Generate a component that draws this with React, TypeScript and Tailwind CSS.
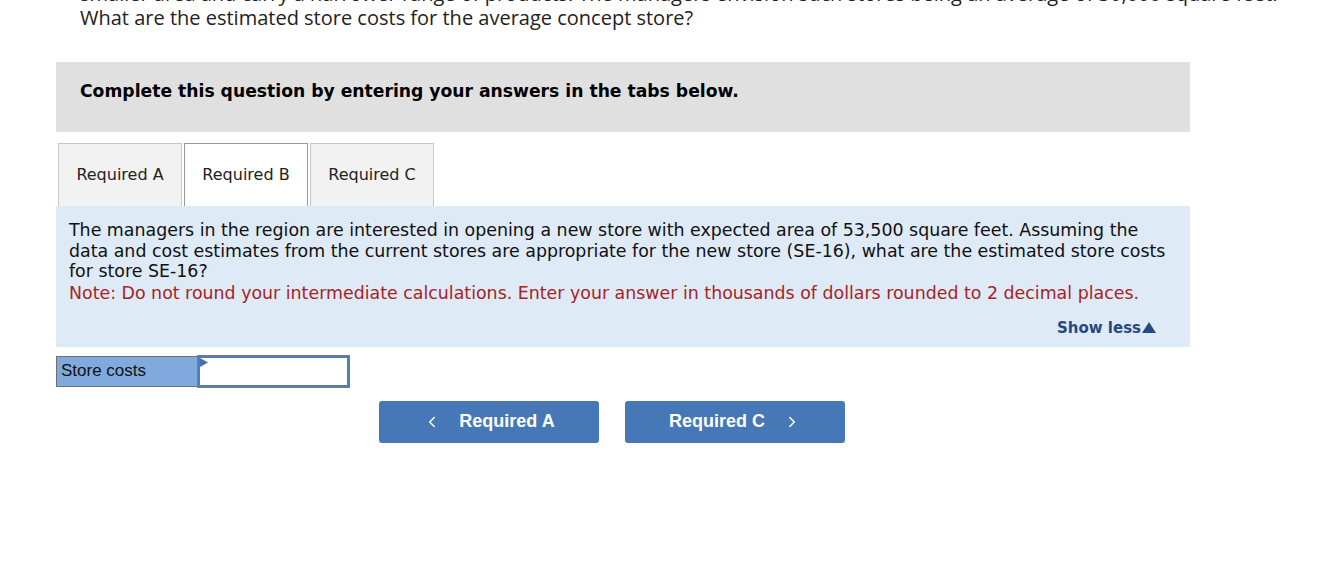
import { ChevronLeft, ChevronRight } from "lucide-react";

const verdana = "font-['Verdana','DejaVu_Sans',sans-serif]";
const arial = "font-['Liberation_Sans',Arial,sans-serif]";

export default function App() {
    return (
        <div className="w-[1320px] h-[574px] bg-white overflow-hidden">
            {/* Question stem, partly scrolled off */}
            <div className="pl-[80px] -mt-[18px] font-['Open_Sans',sans-serif] text-[20px] leading-[24px] text-[#222] whitespace-nowrap">
                <p>smaller area and carry a narrower range of products. The managers envision such stores being an average of 30,000 square feet.</p>
                <p>What are the estimated store costs for the average concept store?</p>
            </div>

            <div className="ml-[56px] w-[1134px]">
                {/* Instructions */}
                <div className="mt-[32px] h-[70px] bg-[#e0e0e0] px-[24px] pt-[19px]">
                    <p className={`${verdana} font-bold text-[17.2px] leading-[20px] text-black`}>
                        Complete this question by entering your answers in the tabs below.
                    </p>
                </div>

                {/* Tabs */}
                <div className={`${verdana} flex gap-[2px] mt-[11px] pl-[2px] text-[16px] text-[#222]`}>
                    <div className="w-[124px] h-[63px] flex items-center justify-center bg-[#f2f2f2] border border-b-0 border-[#c6c6c6]">
                        Required A
                    </div>
                    <div className="w-[124px] h-[63px] flex items-center justify-center bg-white border border-b-0 border-[#9a9a9a]">
                        Required B
                    </div>
                    <div className="w-[124px] h-[63px] flex items-center justify-center bg-[#f2f2f2] border border-b-0 border-[#c6c6c6]">
                        Required C
                    </div>
                </div>

                {/* Tab content */}
                <div className={`${verdana} bg-[#dfeaf7] pl-[13px] pr-[11px] pt-[14px] pb-[9px] text-[17.4px] leading-[20.5px] text-[#111]`}>
                    <p>
                        The managers in the region are interested in opening a new store with expected area of 53,500 square feet. Assuming the data and cost estimates from the current stores are appropriate for the new store (SE-16), what are the estimated store costs for store SE-16?
                    </p>
                    <p className="mt-[1.5px] text-[#a8231f]">
                        Note: Do not round your intermediate calculations. Enter your answer in thousands of dollars rounded to 2 decimal places.
                    </p>
                    <div className="flex justify-end mt-[14px] pr-[23px]">
                        <span className="font-bold text-[15px] leading-[20px] text-[#27497f] flex items-center gap-[1px]">
                            Show less
                            <svg width="14" height="11" viewBox="0 0 14 11">
                                <polygon points="7,0 14,11 0,11" fill="#27497f" />
                            </svg>
                        </span>
                    </div>
                </div>

                {/* Answer row */}
                <div className={`${arial} mt-[9px] flex h-[31px] w-[293px] text-[17px] text-[#111]`}>
                    <div className="w-[142px] bg-[#80aade] border border-[#6f6f6f] border-r-0 flex items-center pl-[4px]">
                        Store costs
                    </div>
                    <div className="relative flex-1 bg-white border-[2px] border-[#4f7db8] outline outline-1 outline-[#7a7a7a]">
                        <svg className="absolute left-0 top-0" width="8" height="9" viewBox="0 0 8 9">
                            <polygon points="0,0 8,4.5 0,9" fill="#3f73b6" />
                        </svg>
                    </div>
                </div>

                {/* Navigation */}
                <div className={`${arial} flex gap-[26px] mt-[14px] ml-[323px] text-[18px] font-bold text-white`}>
                    <button className="w-[220px] h-[42px] rounded-[3px] bg-[#4677b6] flex items-center justify-center gap-[18px]">
                        <ChevronLeft className="w-[18px] h-[18px]" strokeWidth={2} />
                        Required A
                    </button>
                    <button className="w-[220px] h-[42px] rounded-[3px] bg-[#4677b6] flex items-center justify-center gap-[18px]">
                        Required C
                        <ChevronRight className="w-[18px] h-[18px]" strokeWidth={2} />
                    </button>
                </div>
            </div>
        </div>
    );
}
